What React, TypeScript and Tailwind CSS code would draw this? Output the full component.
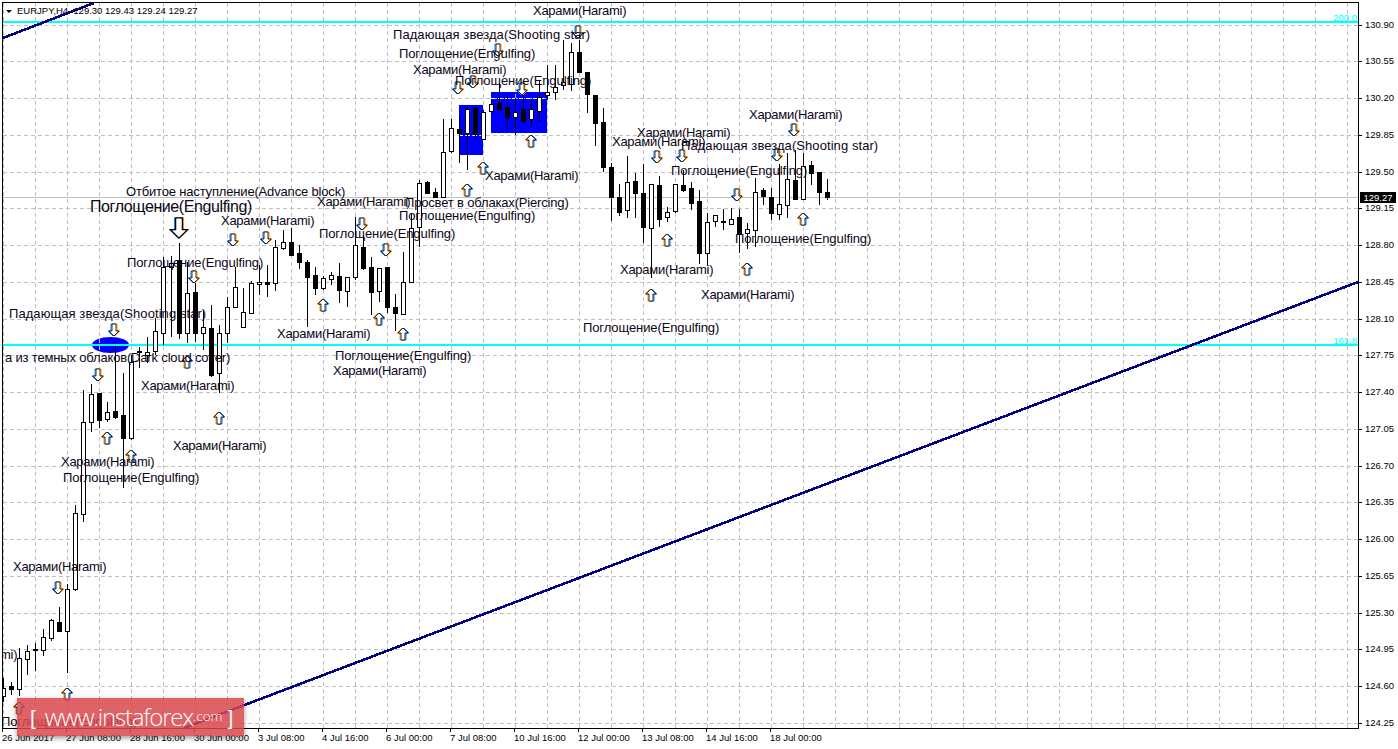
const LEFT = 3;
const TOP = 3;

// n, wick top, wick bottom, body top, body bottom, bullish (1 = white candle)
const CANDLES: number[][] = [
  [0, 678, 702, 688, 696, 1], [1, 682, 695, 686, 689, 0], [2, 648, 696, 658, 689, 1], [3, 645, 675, 651, 659, 1],
  [4, 643, 671, 649, 650, 0], [5, 629, 656, 637, 650, 1], [6, 619, 641, 620, 638, 1], [7, 607, 632, 622, 631, 0],
  [8, 584, 673, 589, 631, 1], [9, 505, 591, 513, 589, 1], [10, 390, 522, 422, 514, 1], [11, 384, 432, 394, 422, 1],
  [12, 393, 428, 393, 420, 0], [13, 402, 422, 412, 419, 1], [14, 346, 419, 411, 417, 0], [15, 373, 488, 415, 438, 0],
  [16, 355, 440, 362, 438, 1], [17, 347, 368, 351, 352, 0], [18, 337, 363, 352, 355, 1], [19, 318, 355, 331, 351, 1],
  [20, 257, 345, 267, 333, 1], [21, 256, 337, 263, 267, 1], [22, 243, 339, 260, 333, 0], [23, 262, 343, 293, 333, 1],
  [24, 273, 342, 292, 333, 0], [25, 310, 350, 327, 333, 1], [26, 305, 377, 328, 375, 0], [27, 325, 393, 333, 373, 1],
  [28, 297, 343, 307, 333, 1], [29, 267, 308, 287, 307, 1], [30, 288, 328, 312, 327, 1], [31, 281, 314, 283, 313, 1],
  [32, 265, 295, 282, 284, 1], [33, 265, 297, 282, 284, 0], [34, 240, 291, 247, 283, 1], [35, 230, 250, 242, 248, 1],
  [36, 228, 256, 242, 255, 0], [37, 245, 269, 253, 262, 0], [38, 260, 327, 262, 277, 0], [39, 267, 295, 275, 288, 0],
  [40, 276, 290, 278, 288, 1], [41, 272, 285, 275, 279, 1], [42, 263, 303, 276, 290, 0], [43, 277, 307, 277, 291, 1],
  [44, 217, 280, 245, 277, 1], [45, 235, 270, 247, 268, 0], [46, 257, 315, 267, 292, 0], [47, 268, 302, 268, 291, 1],
  [48, 267, 313, 267, 307, 0], [49, 294, 331, 307, 313, 0], [50, 252, 315, 282, 314, 1], [51, 213, 283, 228, 282, 1],
  [52, 180, 247, 183, 227, 1], [53, 181, 193, 182, 193, 0], [54, 188, 198, 192, 197, 0], [55, 119, 197, 152, 197, 1],
  [56, 119, 153, 128, 151, 1], [57, 116, 163, 129, 133, 0], [58, 106, 170, 109, 133, 1], [59, 107, 137, 108, 134, 0],
  [60, 110, 140, 112, 139, 1], [61, 100, 113, 104, 111, 1], [62, 83, 110, 103, 109, 0], [63, 96, 130, 107, 117, 0],
  [64, 98, 135, 112, 117, 1], [65, 97, 123, 109, 121, 0], [66, 100, 125, 109, 119, 1], [67, 80, 122, 97, 111, 1],
  [68, 65, 100, 92, 95, 1], [69, 65, 100, 87, 92, 1], [70, 40, 90, 82, 85, 1], [71, 43, 91, 52, 84, 1],
  [72, 40, 72, 52, 72, 0], [73, 72, 113, 72, 94, 0], [74, 95, 146, 95, 123, 0], [75, 108, 172, 122, 167, 0],
  [76, 163, 221, 167, 197, 0], [77, 184, 216, 197, 212, 0], [78, 156, 218, 182, 210, 1], [79, 173, 218, 181, 193, 0],
  [80, 164, 243, 193, 227, 0], [81, 184, 278, 184, 228, 1], [82, 176, 227, 185, 219, 0], [83, 207, 222, 212, 217, 1],
  [84, 184, 213, 184, 211, 1], [85, 170, 192, 185, 190, 0], [86, 182, 210, 188, 203, 0], [87, 190, 264, 201, 253, 0],
  [88, 213, 266, 222, 253, 1], [89, 215, 227, 215, 221, 1], [90, 209, 230, 221, 222, 0], [91, 208, 224, 219, 224, 1],
  [92, 209, 253, 217, 234, 0], [93, 223, 249, 229, 233, 1], [94, 178, 247, 192, 230, 1], [95, 188, 205, 190, 196, 0],
  [96, 188, 220, 197, 213, 0], [97, 164, 220, 204, 214, 1], [98, 153, 218, 179, 205, 1], [99, 150, 199, 180, 199, 0],
  [100, 153, 200, 166, 199, 1], [101, 161, 185, 165, 173, 0], [102, 172, 205, 172, 192, 0], [103, 179, 200, 192, 197, 0],
];

const HARAMI = "Харами(Harami)";
const ENGULF = "Поглощение(Engulfing)";
const STAR = "Падающая звезда(Shooting star)";

// text, left edge, vertical centre
const LABELS: [string, number, number][] = [
  [HARAMI, 533, 11], [STAR, 393, 35], [ENGULF, 399, 54], [HARAMI, 413, 70], [ENGULF, 455, 81],
  ["Отбитое наступление(Advance block)", 126, 192], [HARAMI, 221, 221], [HARAMI, 317, 202],
  ["Просвет в облаках(Piercing)", 405, 203], [ENGULF, 399, 216], [ENGULF, 319, 234], [ENGULF, 127, 263],
  [STAR, 9, 314], [HARAMI, 277, 334], [ENGULF, 335, 356], [HARAMI, 333, 371],
  ["а из темных облаков(Dark cloud cover)", 5, 358], [HARAMI, 141, 386], [HARAMI, 173, 446], [HARAMI, 61, 462],
  [ENGULF, 63, 478], [HARAMI, 13, 567], [HARAMI, -76, 655], [ENGULF, 1, 722],
  [HARAMI, 749, 115], [STAR, 681, 146], [HARAMI, 637, 133], [HARAMI, 612, 142], [ENGULF, 671, 171],
  [HARAMI, 485, 176], [ENGULF, 735, 239], [HARAMI, 620, 270], [HARAMI, 701, 295], [ENGULF, 583, 328],
];

// letter spacing that brings each label to the width it has in the original
function labelTracking(text: string) {
  if (text === HARAMI) return -0.28;
  if (text === ENGULF) return -0.1;
  if (text === STAR) return 0.07;
  return -0.17;
}

const DOWN_ARROWS = [
  [233, 240], [266, 238], [362, 224], [386, 250], [194, 277], [114, 330], [98, 375], [58, 588], [458, 88], [473, 82],
  [498, 50], [522, 89], [578, 32], [657, 157], [682, 156], [794, 130], [777, 155], [737, 195],
];
const UP_ARROWS = [
  [467, 190], [483, 168], [531, 141], [667, 240], [803, 219], [747, 269], [651, 295], [323, 305], [379, 319], [403, 334],
  [107, 438], [131, 456], [219, 418], [67, 694], [19, 708], [187, 362],
];

const PRICES = [
  "130.90", "130.55", "130.20", "129.85", "129.50", "129.15", "128.80", "128.45", "128.10", "127.75",
  "127.40", "127.05", "126.70", "126.35", "126.00", "125.65", "125.30", "124.95", "124.60", "124.25",
];
const TIMES = [
  "26 Jun 2017", "27 Jun 08:00", "28 Jun 16:00", "30 Jun 00:00", "3 Jul 08:00", "4 Jul 16:00", "6 Jul 00:00",
  "7 Jul 08:00", "10 Jul 16:00", "12 Jul 00:00", "13 Jul 08:00", "14 Jul 16:00", "18 Jul 00:00",
];

const priceY = (i: number) => Math.round(24.5 + i * 36.75);

function Arrow({ x, y, up, scale = 1 }: { x: number; y: number; up?: boolean; scale?: number }) {
  // hollow block arrow, drawn pointing down, with the colour fringes of the original font rendering
  const s = scale;
  const d = up ? -1 : 1;
  const pts = [
    [-2, -6], [2, -6], [2, 1], [5, 1], [0, 6], [-5, 1], [-2, 1],
  ].map(([px, py]) => `${x + px * s},${y + py * s * d}`).join(" ");
  return (
    <g fill="none" strokeLinejoin="miter" shapeRendering="auto">
      <polygon points={pts} stroke={up ? "#ff8c00" : "#0078ff"} strokeWidth="1" transform="translate(-1 0)" />
      <polygon points={pts} stroke={up ? "#0078ff" : "#ff8c00"} strokeWidth="1" transform="translate(1 0)" />
      <polygon points={pts} fill="#fff" stroke="#000" strokeWidth={s > 1 ? 1.3 : 0.8} />
    </g>
  );
}

function Chart() {
  const hLines = PRICES.map((_, i) => priceY(i));
  const vLines = Array.from({ length: 43 }, (_, i) => 3.5 + i * 32);
  return (
    <svg viewBox={`${LEFT} ${TOP} 1355 725`} className="block h-[725px] w-[1355px]" shapeRendering="crispEdges">
      {/* blue pattern zones sit under the grid and the candles */}
      <rect x="459" y="105" width="24" height="50" fill="#0000ff" />
      <rect x="491" y="92" width="56" height="41" fill="#0000ff" />
      <ellipse cx="110.5" cy="345" rx="18.5" ry="8" fill="#0000ff" shapeRendering="auto" />

      {hLines.map((y) => (
        <line key={y} x1="3" x2="1358" y1={y + 0.5} y2={y + 0.5} stroke="#c0c0c0" strokeDasharray="4 3" />
      ))}
      {vLines.map((x) => (
        <line key={x} x1={x} x2={x} y1="3" y2="728" stroke="#c0c0c0" strokeDasharray="4 3" />
      ))}
      <line x1="459" x2="483" y1="135.5" y2="135.5" stroke="#fff" strokeDasharray="4 3" />
      <line x1="491" x2="547" y1="98.5" y2="98.5" stroke="#fff" strokeDasharray="4 3" />

      <line x1="3" x2="1358" y1="197.5" y2="197.5" stroke="#c0c0c0" />
      <line x1="3" x2="1358" y1="22" y2="22" stroke="#00ffff" strokeWidth="2" />
      <line x1="3" x2="1358" y1="345" y2="345" stroke="#00ffff" strokeWidth="2" />

      <line x1="3" y1="38" x2="94" y2="3" stroke="#000080" strokeWidth="2.6" />
      <line x1="184" y1="728" x2="1358" y2="282" stroke="#000080" strokeWidth="2.6" />

      {CANDLES.map(([n, hi, lo, top, bottom, bull]) => {
        const x = 3.5 + n * 8;
        return (
          <g key={n}>
            <line x1={x} x2={x} y1={hi} y2={lo} stroke="#000" />
            <rect
              x={x - 2}
              y={top + 0.5}
              width="4"
              height={Math.max(bottom - top, 1)}
              fill={bull ? "#fff" : "#000"}
              stroke="#000"
            />
          </g>
        );
      })}

      {DOWN_ARROWS.map(([x, y]) => <Arrow key={`d${x}`} x={x} y={y} />)}
      {UP_ARROWS.map(([x, y]) => <Arrow key={`u${x}`} x={x} y={y} up />)}
      <Arrow x={179} y={228} scale={1.7} />
    </svg>
  );
}

export default function App() {
  return (
    <div className="relative h-[749px] w-[1398px] overflow-hidden bg-white pl-[2px] pt-[2px] font-['Liberation_Sans',Arial,sans-serif] text-black">
      <div className="flex">
        <div className="relative h-[727px] w-[1357px] overflow-hidden border border-black">
          <Chart />

          <div className="absolute left-[0px] top-[2px] flex items-center gap-[3px] pl-[3px] text-[9.5px] leading-3">
            <span className="h-0 w-0 border-x-[3px] border-t-[3px] border-x-transparent border-t-black" />
            <span className="ml-[2px]">EURJPY,H4&nbsp; 129.30 129.43 129.24 129.27</span>
          </div>

          {LABELS.map(([text, x, y], i) => (
            <span
              key={i}
              className="absolute whitespace-nowrap text-[13px] leading-4 text-[#0c0618]"
              style={{ left: x - LEFT, top: y - TOP - 8, letterSpacing: labelTracking(text) }}
            >
              {text}
            </span>
          ))}
          <span className="absolute left-[87px] top-[194px] whitespace-nowrap text-[16px] leading-5 tracking-[-0.4px] text-[#0c0618]">
            {ENGULF}
          </span>

          <span className="absolute right-[1px] top-[9px] text-[9.5px] leading-3 text-[#00ffff]">200.0</span>
          <span className="absolute right-[1px] top-[332px] text-[9.5px] leading-3 text-[#00ffff]">161.8</span>
        </div>

        <div className="relative h-[727px] flex-1">
          {PRICES.map((price, i) => (
            <div key={price} className="absolute left-0 flex items-center" style={{ top: priceY(i) - 8 }}>
              <span className="h-px w-[3px] bg-black" />
              <span className="ml-[3px] text-[9.5px] leading-3">{price}</span>
            </div>
          ))}
          <span className="absolute left-[1px] top-[190px] h-[11px] w-[36px] bg-black text-center text-[9.5px] leading-[11px] text-white">
            129.27
          </span>
        </div>
      </div>

      <div className="relative h-[18px] w-[1357px]">
        {TIMES.map((time, i) => (
          <div key={time} className="absolute top-0" style={{ left: i * 64 }}>
            <span className="block h-[3px] w-px bg-black" />
            <span className="block whitespace-nowrap text-[9.5px] leading-3">{time}</span>
          </div>
        ))}
      </div>

      {/* watermark lies over the chart and the time axis */}
      <div className="absolute left-[17px] top-[698px] flex h-[38px] w-[227px] items-center bg-[#d9474c]/85 pl-[13px] text-white shadow-[0_2px_5px_rgba(0,0,0,0.4)]">
        <span className="text-[21px] font-light leading-none">[</span>
        <span className="ml-[9px] font-['Open_Sans',sans-serif] text-[24px] font-light leading-none tracking-[-1.2px]">
          www.instaforex
        </span>
        <span className="font-['Open_Sans',sans-serif] text-[13.5px] font-light leading-none">.com</span>
        <span className="ml-[5px] text-[21px] font-light leading-none">]</span>
      </div>
    </div>
  );
}
